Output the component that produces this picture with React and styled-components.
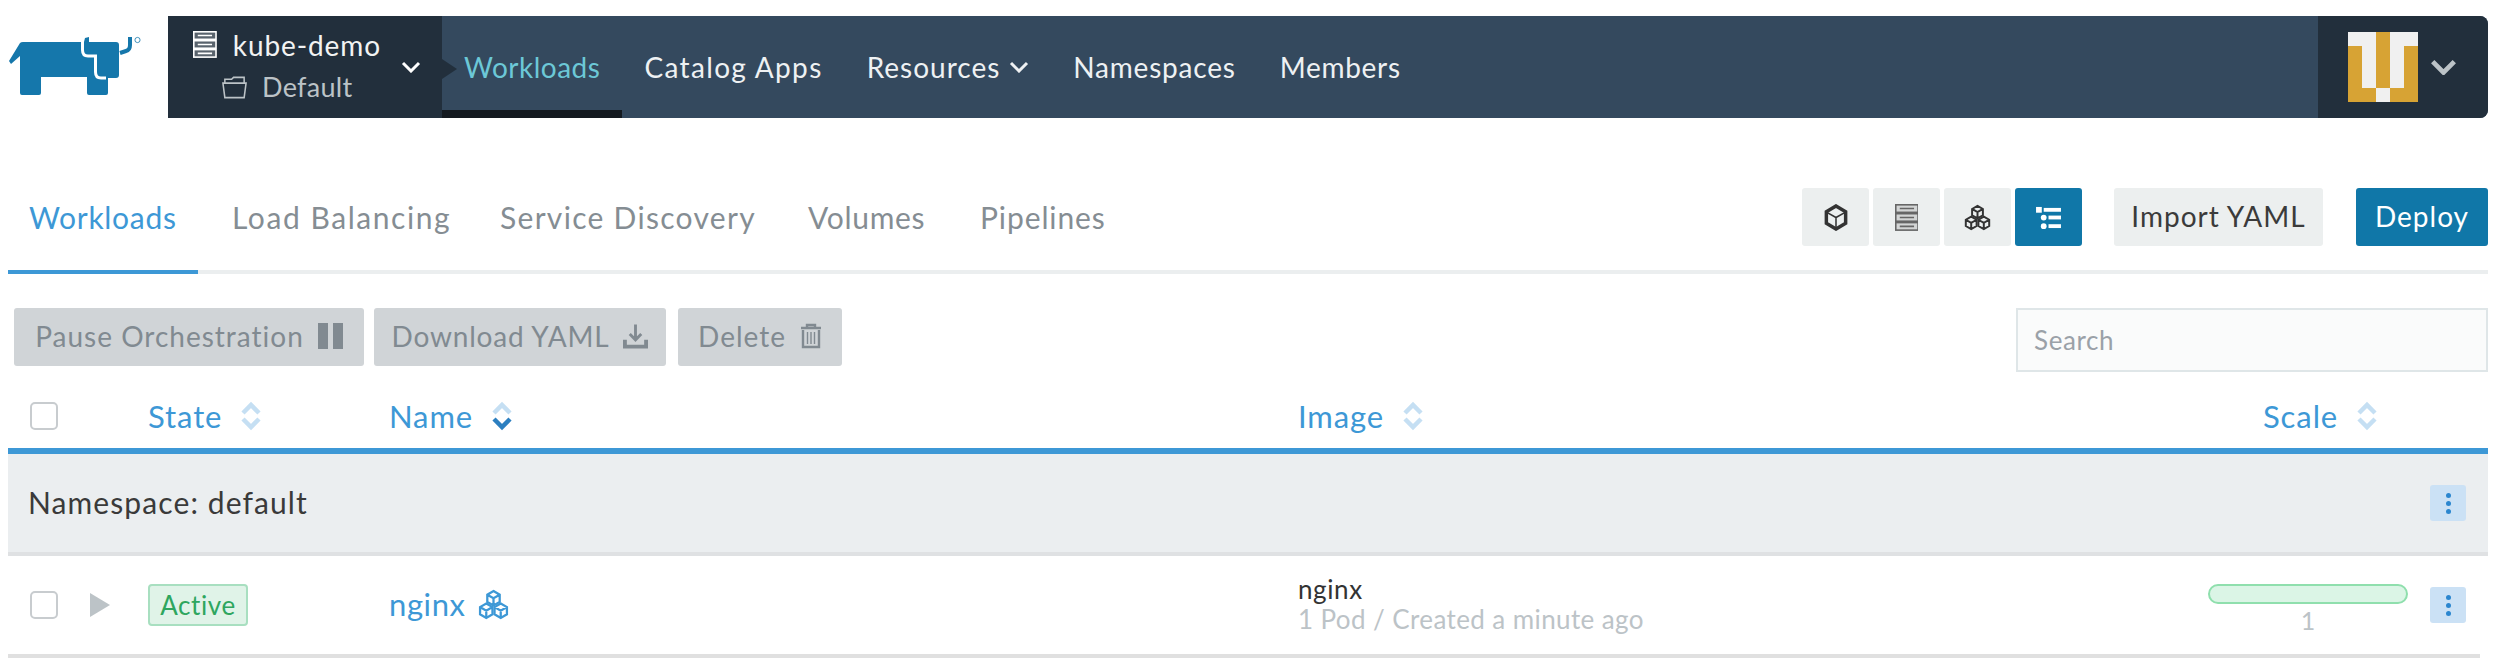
import React from "react";
import styled, { createGlobalStyle } from "styled-components";

const GlobalStyle = createGlobalStyle`
    html, body {
        margin: 0;
        padding: 0;
        background: #fff;
    }
    body {
        font-family: Lato, "Open Sans", sans-serif;
        font-weight: 400;
        color: #222;
    }
`;

const Cow = () => (
    <svg width="145" height="84" viewBox="0 16 145 84" style={{ display: "block" }}>
        <path
            fill="#1577ab"
            d="M9 61 L20 43 Q21 42 23 42 H84 L85 38 L89 37 V42 H116 Q119 42 119 45 V75 Q119 78 116 78 H108 V93 Q108 95 106 95 H89 Q87 95 87 93 V77 H41 V93 Q41 95 39 95 H22 Q20 95 20 93 V56 L11 64 Z"
        />
        <path
            fill="none"
            stroke="#fff"
            strokeWidth="3"
            d="M82.5 36 V50 Q82.5 56 88 56 H95.5 V72 Q95.5 78 101 78 H106"
        />
        <path fill="none" stroke="#1577ab" strokeWidth="4" d="M130 37 V45 Q130 50 126 51 L120 53" />
        <circle cx="137.5" cy="40" r="2.6" fill="none" stroke="#1577ab" strokeWidth="0.8" />
    </svg>
);

const ServerIcon = ({ size = 27, color = "#fff", fill }) => (
    <svg width={(size * 30) / 34} height={size} viewBox="0 0 30 34" fill="none" stroke={color} strokeWidth="2">
        <rect x="1" y="1" width="28" height="9.5" fill={fill || color} fillOpacity="0.25" />
        <rect x="1" y="12.2" width="28" height="9.5" fill={fill || color} fillOpacity="0.25" />
        <rect x="1" y="23.4" width="28" height="9.5" fill={fill || color} fillOpacity="0.25" />
        <path d="M6 5.7 H24 M6 17 H24 M6 28.2 H24" />
    </svg>
);

const FolderIcon = () => (
    <svg width="27" height="24" viewBox="0 0 28 24" fill="none" stroke="#bcc3c7" strokeWidth="1.6">
        <path d="M2 8 H26 L24 23 H4 Z" />
        <path d="M4 8 V4 H11 L13 2 H24 V8" />
    </svg>
);

const Chevron = ({ size = 20, color = "#fff", weight = 3 }) => (
    <svg width={size} height={size * 0.6} viewBox="0 0 20 12" fill="none" stroke={color} strokeWidth={weight}>
        <path d="M2 2 L10 10 L18 2" />
    </svg>
);

const CubeIcon = ({ color = "#333" }) => (
    <svg width="24" height="27" viewBox="0 0 24 28" fill="none" stroke={color} strokeWidth="3.6">
        <path d="M12 2 L22 8 V20 L12 26 L2 20 V8 Z" />
        <path strokeWidth="1.6" d="M3 9 L12 14 L21 9 M12 14 V25" />
    </svg>
);

const CubesIcon = ({ color = "#333", size = 27 }) => (
    <svg width={size} height={size} viewBox="0 0 30 30" fill="none" stroke={color} strokeWidth="2.2">
        <path d="M15 2 L21 5.5 V12.5 L15 16 L9 12.5 V5.5 Z M9 5.5 L15 9 L21 5.5 M15 9 V16" />
        <path d="M8 14 L14 17.5 V24.5 L8 28 L2 24.5 V17.5 Z M2 17.5 L8 21 L14 17.5 M8 21 V28" />
        <path d="M22 14 L28 17.5 V24.5 L22 28 L16 24.5 V17.5 Z M16 17.5 L22 21 L28 17.5 M22 21 V28" />
    </svg>
);

const ListIcon = () => (
    <svg width="27" height="23" viewBox="0 0 28 24" fill="#fff">
        <rect x="1" y="1" width="6" height="6" />
        <rect x="9" y="2" width="18" height="4" />
        <circle cx="9" cy="12" r="3" />
        <rect x="14" y="10" width="13" height="4" />
        <circle cx="9" cy="21" r="3" />
        <rect x="14" y="19" width="13" height="4" />
    </svg>
);

const PauseIcon = () => (
    <svg width="25" height="26" viewBox="0 0 25 26" fill="#818a91">
        <rect x="0" y="0" width="10" height="26" />
        <rect x="15" y="0" width="10" height="26" />
    </svg>
);

const DownloadIcon = () => (
    <svg width="25" height="26" viewBox="0 0 26 26" fill="none" stroke="#818a91" strokeWidth="3">
        <path d="M13 1 V16 M7 11 L13 17 L19 11" />
        <path strokeWidth="4" d="M2 17 V24 H24 V17" />
    </svg>
);

const TrashIcon = () => (
    <svg width="22" height="26" viewBox="0 0 22 26" fill="none" stroke="#818a91" strokeWidth="2.4">
        <path d="M1 5 H21 M7 5 V2 H15 V5 M3 7 V24 H19 V7" />
        <path strokeWidth="1.4" d="M7.5 9 V21 M11 9 V21 M14.5 9 V21" />
    </svg>
);

const SortIcon = ({ active }) => (
    <svg width="22" height="30" viewBox="0 0 22 30" fill="none" strokeWidth="4.5" style={{ marginLeft: 18 }}>
        <path stroke="#c5dff3" d="M3 12 L11 4 L19 12" />
        <path stroke={active ? "#2c7fc0" : "#c5dff3"} d="M3 18 L11 26 L19 18" />
    </svg>
);

const Page = styled.div`
    width: 2496px;
    height: 666px;
    overflow: hidden;
    background: #fff;
`;

const Header = styled.header`
    display: flex;
    height: 102px;
    padding: 16px 8px 0 0;
`;

const Logo = styled.div`
    flex: 0 0 168px;
`;

const Bar = styled.div`
    flex: 1;
    display: flex;
    background: #34495e;
    border-radius: 0 8px 8px 0;
`;

const Cluster = styled.div`
    position: relative;
    flex: 0 0 274px;
    display: flex;
    align-items: center;
    justify-content: space-between;
    padding: 0 21px 0 25px;
    box-sizing: border-box;
    background: #222f3c;
    &::after {
        content: "";
        position: absolute;
        right: -15px;
        top: 43px;
        border-left: 15px solid #222f3c;
        border-top: 10px solid transparent;
        border-bottom: 10px solid transparent;
    }
`;

const ClusterRows = styled.div`
    display: flex;
    flex-direction: column;
    gap: 8px;
    margin-top: -3px;
`;

const ClusterRow = styled.div`
    display: flex;
    align-items: center;
    gap: ${(p) => (p.$sub ? "14px" : "16px")};
    padding-left: ${(p) => (p.$sub ? "28px" : "0")};
    font-size: ${(p) => (p.$sub ? "27px" : "28px")};
    line-height: 34px;
    letter-spacing: ${(p) => (p.$sub ? "0.3px" : "0.9px")};
    color: ${(p) => (p.$sub ? "#bcc3c7" : "#f2f3f3")};
`;

const Nav = styled.nav`
    flex: 1;
    display: flex;
`;

const NavItem = styled.div`
    display: flex;
    align-items: center;
    gap: 9px;
    height: 102px;
    box-sizing: border-box;
    padding: 0 22px;
    font-size: 28px;
    letter-spacing: ${(p) => p.$ls || 0.7}px;
    color: ${(p) => (p.$active ? "#6cc8d7" : "#eef1f3")};
    border-bottom: ${(p) => (p.$active ? "8px solid #141a20" : "none")};
    padding-top: ${(p) => (p.$active ? "8px" : "0")};
`;

const User = styled.div`
    flex: 0 0 170px;
    display: flex;
    align-items: center;
    gap: 12px;
    padding-left: 30px;
    box-sizing: border-box;
    background: #222f3c;
    border-radius: 0 8px 8px 0;
`;

const Avatar = styled.div`
    display: grid;
    grid-template-columns: repeat(5, 14px);
    grid-template-rows: repeat(5, 14px);
`;

const Pixel = styled.div`
    background: ${(p) => (p.$on ? "#d7a334" : "#f0f0f0")};
`;

const Tabs = styled.div`
    display: flex;
    align-items: flex-start;
    height: 156px;
    padding: 70px 8px 0 8px;
    box-sizing: border-box;
`;

const TabList = styled.div`
    display: flex;
    flex: 1;
    height: 82px;
    border-bottom: 4px solid #ebeeef;
`;

const Tab = styled.div`
    height: 82px;
    width: ${(p) => p.$w}px;
    padding: 0 ${(p) => (p.$active ? 20 : 0)}px 0 ${(p) => (p.$active ? 21 : 34)}px;
    flex: none;
    font-size: 30px;
    line-height: 58px;
    white-space: nowrap;
    letter-spacing: ${(p) => p.$ls || 0.7}px;
    color: ${(p) => (p.$active ? "#3d98d6" : "#858d93")};
    border-bottom: ${(p) => (p.$active ? "4px solid #3d98d6" : "none")};
`;

const TabActions = styled.div`
    display: flex;
    align-items: flex-start;
    height: 82px;
    border-bottom: 4px solid #ebeeef;
`;

const IconGroup = styled.div`
    display: flex;
    gap: 4px;
    margin-right: 32px;
`;

const IconButton = styled.div`
    width: 67px;
    height: 58px;
    display: flex;
    align-items: center;
    justify-content: center;
    border-radius: 3px;
    background: ${(p) => (p.$active ? "#1077a8" : "#ecefef")};
`;

const Button = styled.div`
    width: ${(p) => p.$w}px;
    height: 58px;
    box-sizing: border-box;
    display: flex;
    align-items: center;
    justify-content: center;
    gap: 14px;
    margin-right: ${(p) => p.$mr || 0}px;
    margin-left: ${(p) => p.$ml || 0}px;
    padding-bottom: 2px;
    border-radius: 3px;
    font-size: 28px;
    letter-spacing: ${(p) => p.$ls || 1}px;
    white-space: pre;
    background: ${(p) => (p.$primary ? "#1077a8" : p.$disabled ? "#d0d4d7" : "#ecefef")};
    color: ${(p) => (p.$primary ? "#fff" : p.$disabled ? "#818a91" : "#3b3b3b")};
`;

const Actions = styled.div`
    display: flex;
    justify-content: space-between;
    padding: 34px 8px 0 14px;
`;

const ActionButtons = styled.div`
    display: flex;
    gap: 10px;
`;

const Search = styled.div`
    width: 472px;
    height: 64px;
    box-sizing: border-box;
    padding-left: 16px;
    border: 2px solid #dfe6e8;
    background: #fafbfb;
    font-size: 26px;
    line-height: 60px;
    letter-spacing: 0.6px;
    color: #9aa1a8;
`;

const Table = styled.div`
    margin: 0 8px;
`;

const Cols = styled.div`
    display: grid;
    grid-template-columns: 140px 241px 909px 910px 200px 1fr;
    align-items: center;
`;

const HeadRow = styled(Cols)`
    height: 82px;
    padding-top: 11px;
    box-sizing: border-box;
    border-bottom: 6px solid #3d98d6;
    font-size: 31px;
    letter-spacing: 0.9px;
    color: #3d98d6;
`;

const HeadCell = styled.div`
    display: flex;
    align-items: center;
    padding-left: ${(p) => p.$indent || 0}px;
    white-space: nowrap;
`;

const CheckCell = styled.div`
    display: flex;
    align-items: center;
    gap: 32px;
    padding-left: 22px;
`;

const Check = styled.div`
    width: 28px;
    height: 28px;
    box-sizing: border-box;
    border: 2px solid #c8cccf;
    border-radius: 5px;
`;

const Expand = styled.div`
    border-left: 20px solid #bcc3c7;
    border-top: 12px solid transparent;
    border-bottom: 12px solid transparent;
`;

const GroupRow = styled.div`
    display: flex;
    align-items: center;
    justify-content: space-between;
    height: 102px;
    box-sizing: border-box;
    padding: 0 22px 0 20px;
    background: #ebeef0;
    border-bottom: 4px solid #dfe1e3;
    font-size: 30px;
    letter-spacing: 1.1px;
    color: #3a3a3a;
`;

const GroupName = styled.span`
    margin-top: -3px;
`;

const MoreButton = styled.div`
    width: 36px;
    height: 36px;
    justify-self: end;
    margin-right: ${(p) => p.$mr || 0}px;
    display: flex;
    flex-direction: column;
    align-items: center;
    justify-content: center;
    gap: 3px;
    border-radius: 3px;
    background: #cbe1f5;
`;

const Dot = styled.span`
    width: 5px;
    height: 5px;
    border-radius: 50%;
    background: #2b86cf;
`;

const DataRow = styled(Cols)`
    height: 102px;
    margin-right: 8px;
    box-sizing: border-box;
    border-bottom: 4px solid #e0e0e0;
`;

const Badge = styled.span`
    display: inline-flex;
    align-items: center;
    justify-content: center;
    width: 100px;
    height: 42px;
    box-sizing: border-box;
    border: 2px solid #a8dfc0;
    border-radius: 4px;
    background: #e0f3e8;
    color: #2ea65f;
    font-size: 26px;
    letter-spacing: 0.6px;
`;

const NameLink = styled.div`
    display: flex;
    align-items: center;
    gap: 12px;
    margin-top: -2px;
    font-size: 31px;
    letter-spacing: 0.6px;
    color: #3d98d6;
`;

const ImageCell = styled.div`
    margin-top: -2px;
`;

const ImageName = styled.div`
    font-size: 26px;
    line-height: 30px;
    letter-spacing: 0.6px;
    color: #333;
`;

const ImageMeta = styled.div`
    font-size: 26px;
    line-height: 30px;
    letter-spacing: 0.4px;
    color: #bcc3c7;
`;

const ScaleCell = styled.div`
    display: flex;
    flex-direction: column;
    align-items: center;
    margin-top: 8px;
`;

const ScaleBar = styled.div`
    width: 200px;
    height: 20px;
    box-sizing: border-box;
    border: 2px solid #8fdfad;
    border-radius: 10px;
    background: #dbf5e6;
`;

const ScaleValue = styled.div`
    margin-top: 2px;
    font-size: 25px;
    line-height: 28px;
    color: #bcc3c7;
`;

const More = ({ mr }) => (
    <MoreButton $mr={mr}>
        <Dot />
        <Dot />
        <Dot />
    </MoreButton>
);

const avatar = [
    [0, 0, 1, 0, 0],
    [1, 0, 1, 0, 1],
    [1, 0, 1, 0, 1],
    [1, 0, 1, 0, 1],
    [1, 1, 0, 1, 1],
];

export default function App() {
    return (
        <Page>
            <GlobalStyle />
            <Header>
                <Logo>
                    <Cow />
                </Logo>
                <Bar>
                    <Cluster>
                        <ClusterRows>
                            <ClusterRow>
                                <ServerIcon />
                                kube-demo
                            </ClusterRow>
                            <ClusterRow $sub>
                                <FolderIcon />
                                Default
                            </ClusterRow>
                        </ClusterRows>
                        <Chevron />
                    </Cluster>
                    <Nav>
                        <NavItem $active $ls={0.5}>
                            Workloads
                        </NavItem>
                        <NavItem $ls={1.35}>Catalog Apps</NavItem>
                        <NavItem $ls={1}>
                            Resources <Chevron size={20} color="#eef1f3" />
                        </NavItem>
                        <NavItem $ls={0.8}>Namespaces</NavItem>
                        <NavItem>Members</NavItem>
                    </Nav>
                    <User>
                        <Avatar>
                            {avatar.flat().map((on, i) => (
                                <Pixel key={i} $on={on} />
                            ))}
                        </Avatar>
                        <Chevron size={27} color="#bcc3c7" weight={3.5} />
                    </User>
                </Bar>
            </Header>
            <Tabs>
                <TabList>
                    <Tab $active $w={149}>
                        Workloads
                    </Tab>
                    <Tab $w={234} $ls={1.55}>
                        Load Balancing
                    </Tab>
                    <Tab $w={274} $ls={1.3}>
                        Service Discovery
                    </Tab>
                    <Tab $w={138}>Volumes</Tab>
                    <Tab $w={150} $ls={0.9}>
                        Pipelines
                    </Tab>
                </TabList>
                <TabActions>
                    <IconGroup>
                        <IconButton>
                            <CubeIcon />
                        </IconButton>
                        <IconButton>
                            <ServerIcon color="#666" fill="#888" />
                        </IconButton>
                        <IconButton>
                            <CubesIcon />
                        </IconButton>
                        <IconButton $active>
                            <ListIcon />
                        </IconButton>
                    </IconGroup>
                    <Button $mr={33} $w={209}>
                        Import YAML
                    </Button>
                    <Button $primary $w={132}>
                        Deploy
                    </Button>
                </TabActions>
            </Tabs>
            <Actions>
                <ActionButtons>
                    <Button $disabled $w={350}>
                        Pause Orchestration
                        <PauseIcon />
                    </Button>
                    <Button $disabled $w={292} $ls={0.8}>
                        Download YAML
                        <DownloadIcon />
                    </Button>
                    <Button $disabled $w={164} $ml={2}>
                        Delete
                        <TrashIcon />
                    </Button>
                </ActionButtons>
                <Search>Search</Search>
            </Actions>
            <Table>
                <HeadRow>
                    <CheckCell>
                        <Check />
                    </CheckCell>
                    <HeadCell>
                        State
                        <SortIcon />
                    </HeadCell>
                    <HeadCell>
                        Name
                        <SortIcon active />
                    </HeadCell>
                    <HeadCell>
                        Image
                        <SortIcon />
                    </HeadCell>
                    <HeadCell $indent={55}>
                        Scale
                        <SortIcon />
                    </HeadCell>
                </HeadRow>
                <GroupRow>
                    <GroupName>Namespace: default</GroupName>
                    <More />
                </GroupRow>
                <DataRow>
                    <CheckCell>
                        <Check />
                        <Expand />
                    </CheckCell>
                    <div>
                        <Badge>Active</Badge>
                    </div>
                    <NameLink>
                        nginx
                        <CubesIcon color="#3d98d6" size={31} />
                    </NameLink>
                    <ImageCell>
                        <ImageName>nginx</ImageName>
                        <ImageMeta>1 Pod / Created a minute ago</ImageMeta>
                    </ImageCell>
                    <ScaleCell>
                        <ScaleBar />
                        <ScaleValue>1</ScaleValue>
                    </ScaleCell>
                    <More mr={14} />
                </DataRow>
            </Table>
        </Page>
    );
}
